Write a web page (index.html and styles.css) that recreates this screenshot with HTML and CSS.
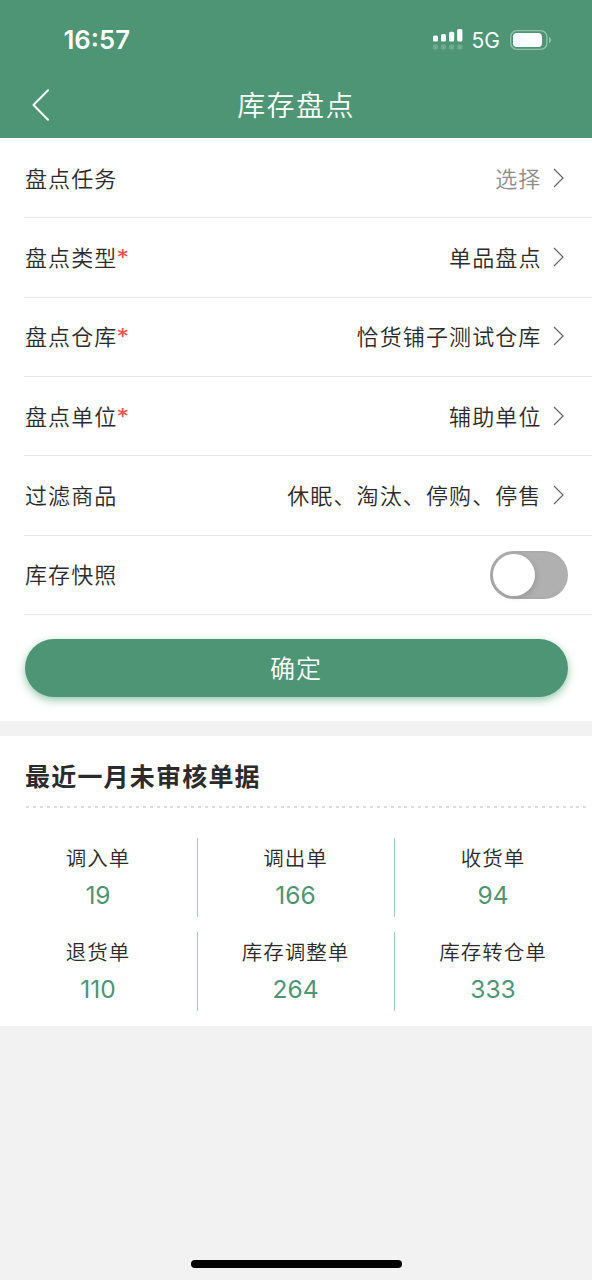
FILE: index.html
```html
<!DOCTYPE html>
<html lang="zh-CN">
<head>
<meta charset="utf-8">
<title>库存盘点</title>
<link rel="stylesheet" href="styles.css">
</head>
<body>
<div class="screen">
  <header class="header">
    <div class="status">
      <span class="time">16:57</span>
      <div class="status-right">
        <svg class="signal" width="30" height="22" viewBox="0 0 30 22" fill="#fff">
          <rect x="0" y="7.5" width="5" height="6" rx="1.6"/><rect x="8" y="6" width="5" height="7.5" rx="1.6"/><rect x="16" y="3.7" width="5.2" height="9.8" rx="1.6"/><rect x="24.2" y="1" width="5.2" height="12.5" rx="1.6"/>
          <g opacity=".2"><rect x="0" y="16.5" width="5" height="5" rx="1.6"/><rect x="8" y="16.5" width="5" height="5" rx="1.6"/><rect x="16" y="16.5" width="5.2" height="5" rx="1.6"/><rect x="24.2" y="16.5" width="5.2" height="5" rx="1.6"/></g>
        </svg>
        <span class="network">5G</span>
        <svg class="battery" width="42" height="20" viewBox="0 0 42 20">
          <rect x=".7" y=".7" width="36.2" height="18.6" rx="6" fill="none" stroke="#fff" stroke-width="1.3" opacity=".42"/>
          <rect x="3" y="3" width="29" height="14" rx="3.8" fill="#fff"/>
          <path d="M39 7C41.500 8 41.500 12 39 13Z" fill="#fff" opacity=".45"/>
        </svg>
      </div>
    </div>
    <div class="nav">
      <svg class="back" width="18" height="32" viewBox="0 0 18 32" fill="none" stroke="#fff" stroke-width="2" stroke-linecap="round" stroke-linejoin="round"><path d="M16 1.300 1.500 16 16 30.700"/></svg>
      <h1 class="title">库存盘点</h1>
    </div>
  </header>
  <main>
    <section class="form">
      <div class="row"><span class="label">盘点任务</span><span class="value placeholder">选择</span><svg class="chevron" viewBox="0 0 11 20"><path d="M1 1 10 10 1 19"/></svg></div>
      <div class="row"><span class="label">盘点类型<i class="required">*</i></span><span class="value">单品盘点</span><svg class="chevron" viewBox="0 0 11 20"><path d="M1 1 10 10 1 19"/></svg></div>
      <div class="row"><span class="label">盘点仓库<i class="required">*</i></span><span class="value">恰货铺子测试仓库</span><svg class="chevron" viewBox="0 0 11 20"><path d="M1 1 10 10 1 19"/></svg></div>
      <div class="row"><span class="label">盘点单位<i class="required">*</i></span><span class="value">辅助单位</span><svg class="chevron" viewBox="0 0 11 20"><path d="M1 1 10 10 1 19"/></svg></div>
      <div class="row"><span class="label">过滤商品</span><span class="value">休眠、淘汰、停购、停售</span><svg class="chevron" viewBox="0 0 11 20"><path d="M1 1 10 10 1 19"/></svg></div>
      <div class="row"><span class="label">库存快照</span><span class="switch"><span class="knob"></span></span></div>
      <button class="confirm" type="button">确定</button>
    </section>
    <section class="pending">
      <h2 class="heading">最近一月未审核单据</h2>
      <div class="dashes"></div>
      <div class="stats">
        <div class="stat"><span class="name">调入单</span><span class="count">19</span></div>
        <div class="stat"><span class="name">调出单</span><span class="count">166</span></div>
        <div class="stat"><span class="name">收货单</span><span class="count">94</span></div>
        <div class="stat"><span class="name">退货单</span><span class="count">110</span></div>
        <div class="stat"><span class="name">库存调整单</span><span class="count">264</span></div>
        <div class="stat"><span class="name">库存转仓单</span><span class="count">333</span></div>
      </div>
    </section>
  </main>
  <div class="home-indicator"></div>
</div>
</body>
</html>
```
FILE: styles.css
```css
* { box-sizing: border-box; }
body {
  margin: 0;
  font-family: "Noto Sans CJK SC", sans-serif;
  font-weight: 350;
  color: #2b2b2b;
  background: #f2f2f2;
}
.screen {
  width: 592px;
  height: 1280px;
  display: flex;
  flex-direction: column;
  overflow: hidden;
}
.header {
  height: 138px;
  flex: none;
  background: #4d9574;
  color: #fff;
}
.status {
  height: 72px;
  padding: 8px 40px 0 63.500px;
  display: flex;
  align-items: center;
  justify-content: space-between;
  font-family: Inter, sans-serif;
}
.time {
  font-size: 25.700px;
  font-weight: 600;
  line-height: 32px;
}
.status-right { display: flex; align-items: center; }
.signal { margin: -2px -0.500px 0 0; }
.network {
  margin: 1px 9.500px 0 9px;
  width: 29px;
  font-size: 21px;
  line-height: 26px;
  font-weight: 400;
  white-space: nowrap;
}
.nav {
  height: 66px;
  display: grid;
  grid-template-columns: 1fr auto 1fr;
  align-items: center;
  padding-left: 31.500px;
  padding-right: 31.500px;
}
.title {
  margin: -2px 0 0;
  font-size: 28px;
  font-weight: 350;
  line-height: 40px;
  letter-spacing: 1.400px;
}
.form {
  height: 583px;
  background: #fff;
  padding: 1px 0 0 24px;
}
.row {
  height: 79.350px;
  border-bottom: 1px solid #e9e9e9;
  padding-right: 28px;
  display: flex;
  align-items: center;
  font-size: 22px;
  letter-spacing: 1.120px;
  line-height: 34px;
}
.label {
  display: flex;
  margin: -3px 0 0 1px;
}
.required {
  color: #fa5151;
  font-family: "DejaVu Sans", sans-serif;
  font-style: normal;
  font-size: 20px;
  font-weight: 700;
  line-height: 34px;
  letter-spacing: 0;
}
.value { margin: -3px 0 0 auto; }
.placeholder { color: #8e8e8e; }
.chevron {
  width: 11px;
  height: 20px;
  margin: -1px 0 0 11.500px;
  fill: none;
  stroke: #666;
  stroke-width: 1.200;
}
.switch {
  width: 78px;
  height: 48px;
  margin-left: auto;
  margin-right: -4px;
  border-radius: 24px;
  background: #b0b0b0;
  border: 2px solid #a6a6a8;
  border-color: #acacad #b0b0b0 #acacad #a6a6a8;
  padding: 1px;
}
.knob {
  display: block;
  width: 42px;
  height: 42px;
  border-radius: 50%;
  background: #fff;
  box-shadow: 2px 2px 5px rgba(0, 0, 0, .12);
}
.confirm {
  display: block;
  width: 543px;
  height: 58px;
  margin: 23.500px 0 0 .5px;
  padding: 0 0 2px;
  border: 0;
  border-radius: 29px;
  background: #4d9574;
  color: #fff;
  font: 350 25px/54px "Noto Sans CJK SC", sans-serif;
  letter-spacing: 1px;
  box-shadow: 0 3px 9px rgba(55, 151, 106, .55);
}
.pending {
  margin-top: 15px;
  height: 290px;
  background: #fff;
}
.heading {
  margin: 0;
  height: 70px;
  padding: 19px 0 0 25px;
  font-size: 25px;
  line-height: 40px;
  font-weight: 700;
  letter-spacing: 1.200px;
}
.dashes {
  height: 2px;
  margin: 0 3px 0 26px;
  background: repeating-linear-gradient(90deg, #ddd 0 3px, transparent 3px 6.880px);
}
.stats {
  margin-top: 30px;
  display: grid;
  grid-template-columns: 198px 197px 197px;
  grid-auto-rows: 79px;
  row-gap: 15px;
}
.stat {
  display: flex;
  flex-direction: column;
  align-items: center;
  border-right: 1px solid #a3c9b8;
}
.stat:nth-child(3n) { border-right: 0; }
.name {
  font-size: 20.500px;
  line-height: 32px;
  margin: 3px 0 0 -1px;
  letter-spacing: 1px;
}
.count {
  font-family: Inter, sans-serif;
  font-weight: 400;
  font-size: 24.500px;
  line-height: 30px;
  margin: 7px 0 0 -1px;
  color: #4d9574;
}
.home-indicator {
  width: 211px;
  height: 8px;
  margin: auto auto 12px;
  border-radius: 4px;
  background: #000;
}
```
